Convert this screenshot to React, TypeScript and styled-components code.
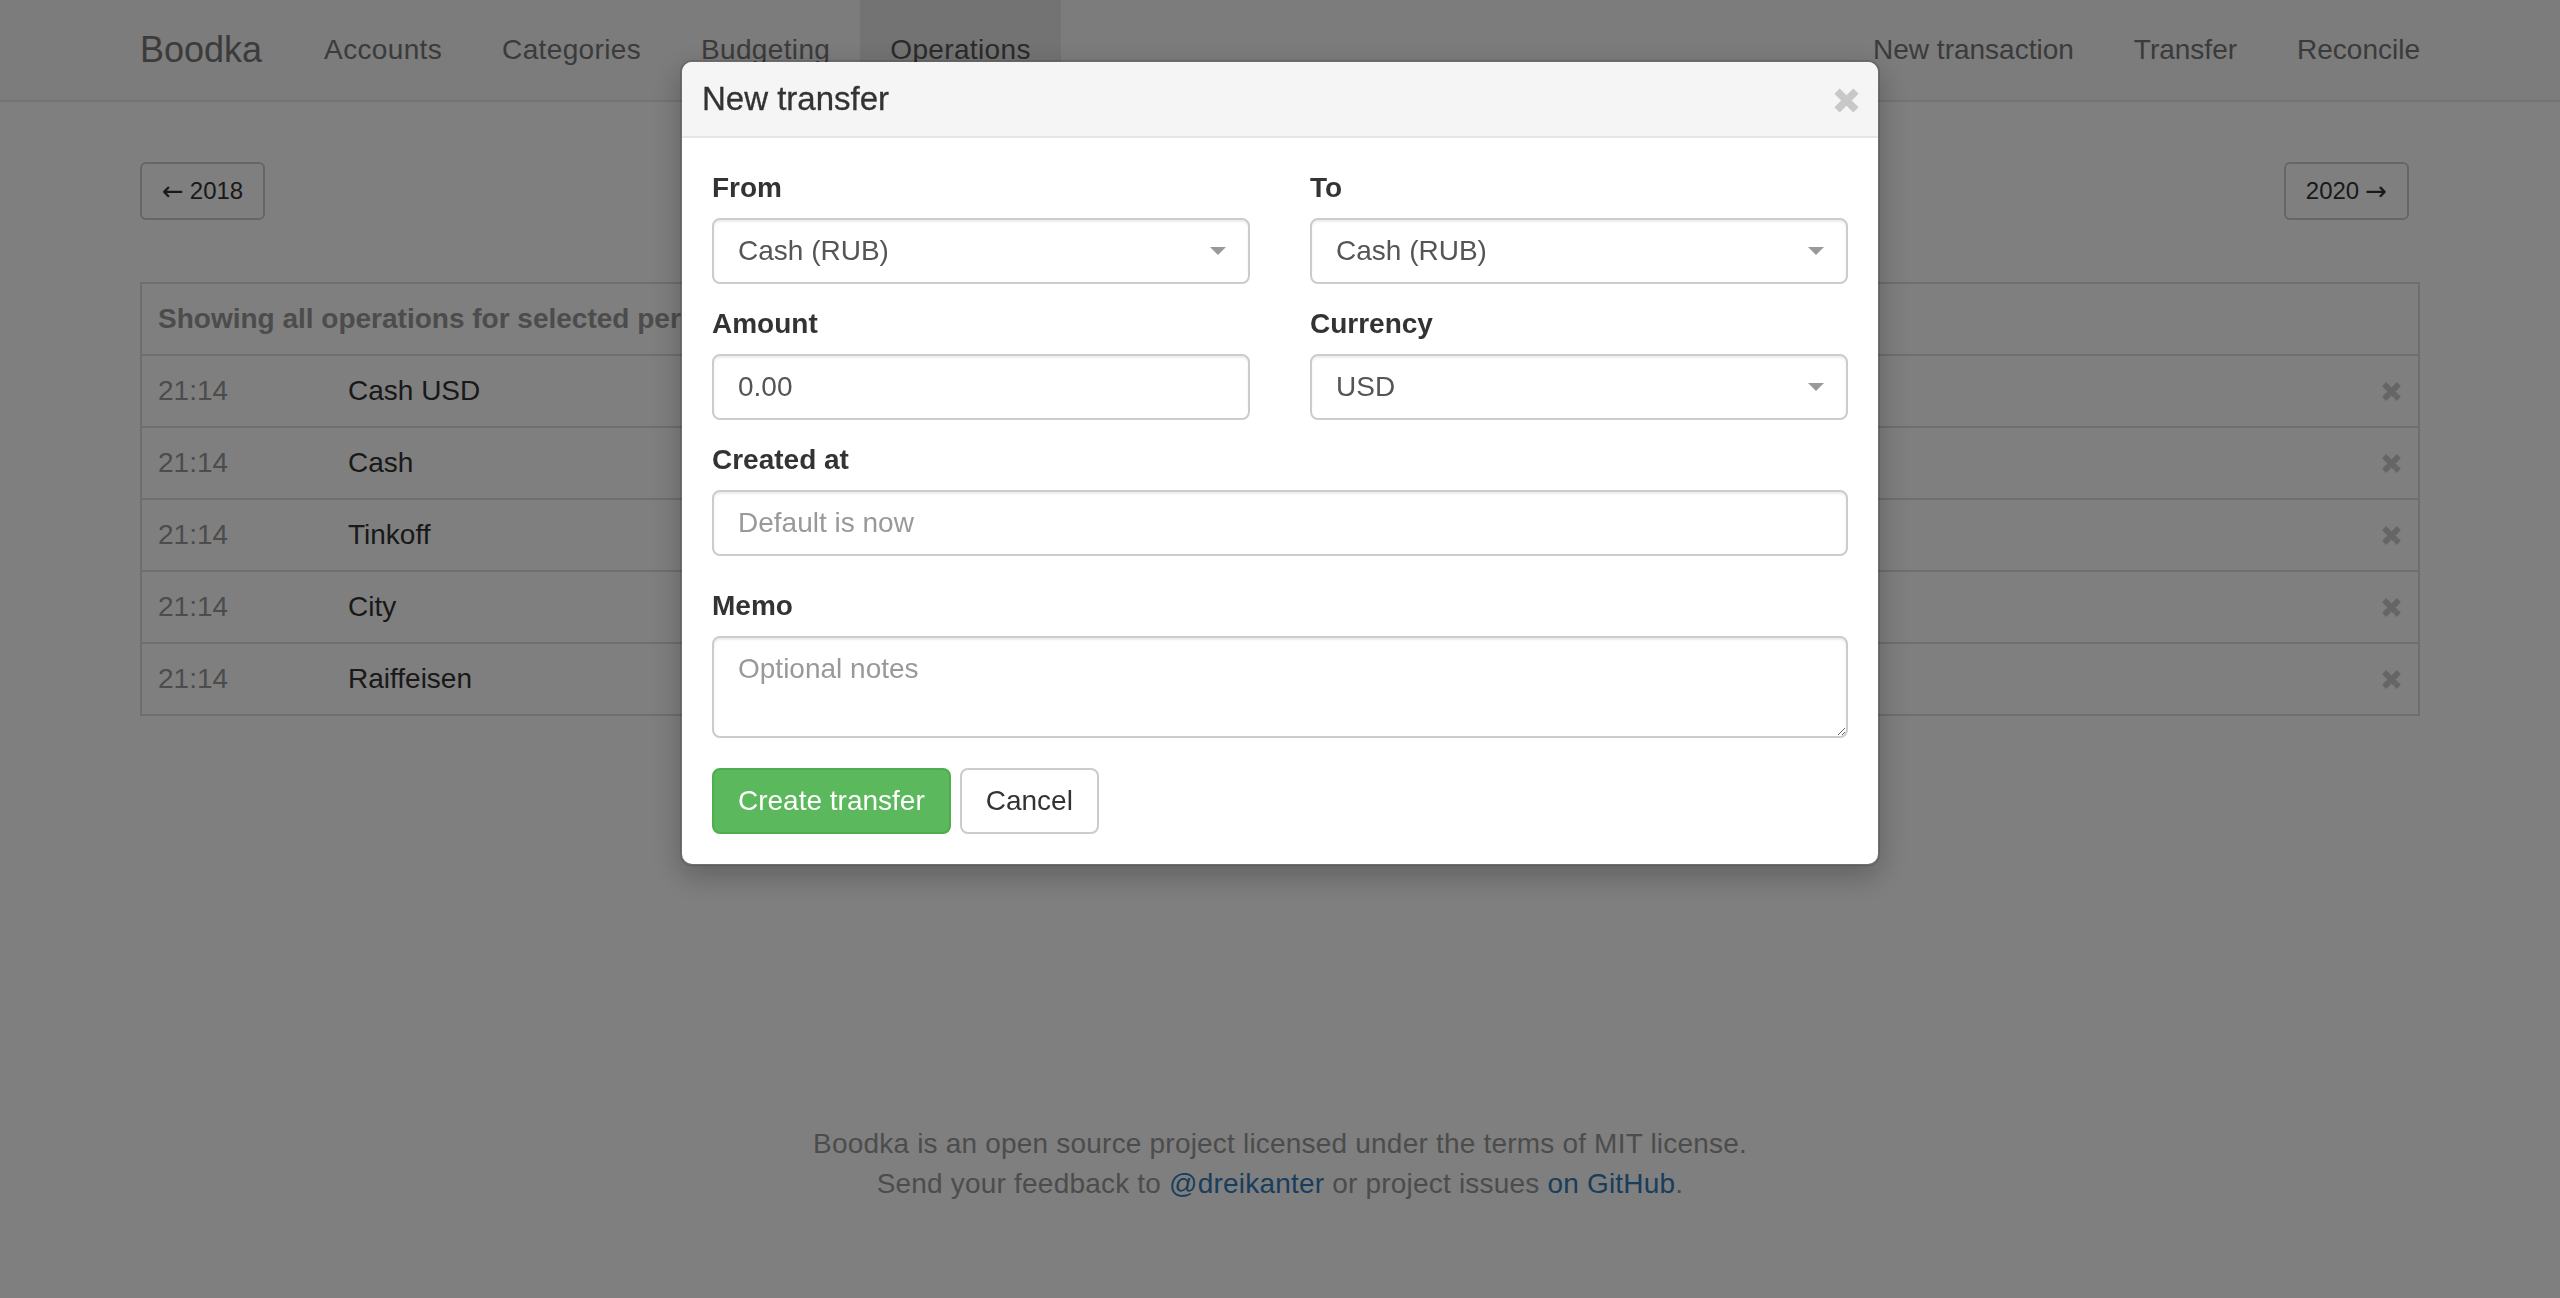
import React from "react";
import styled, { createGlobalStyle, css } from "styled-components";

const GlobalStyle = createGlobalStyle`
  * { box-sizing: border-box; }
  html, body { margin: 0; padding: 0; }
  body {
    background: #fff;
    font-family: "Liberation Sans", Arial, Helvetica, sans-serif;
    font-size: 28px;
    line-height: 40px;
    color: #333;
  }
`;

// ---- navbar ----

const Navbar = styled.nav`
  background: #f8f8f8;
  border-bottom: 2px solid #e7e7e7;
  margin-bottom: 40px;
`;

const NavInner = styled.div`
  width: 2280px;
  height: 100px;
  margin: 0 auto;
  display: flex;
`;

const Brand = styled.a`
  font-size: 36px;
  line-height: 40px;
  padding: 30px 32px 30px 0;
  color: #777;
  text-decoration: none;
`;

const NavList = styled.ul<{ $right?: boolean }>`
  display: flex;
  list-style: none;
  padding: 0;
  letter-spacing: ${({ $right }) => ($right ? "0" : "0.35px")};
  margin: 0 ${({ $right }) => ($right ? "-30px" : "0")} 0 ${({ $right }) => ($right ? "auto" : "0")};
`;

const NavLink = styled.a<{ $active?: boolean }>`
  display: block;
  padding: 30px;
  line-height: 40px;
  text-decoration: none;
  color: ${({ $active }) => ($active ? "#555" : "#777")};
  background: ${({ $active }) => ($active ? "#e7e7e7" : "transparent")};
`;

// ---- page content ----

const Container = styled.main`
  width: 2280px;
  margin: 0 auto;
`;

const YearBar = styled.div`
  display: flex;
  justify-content: space-between;
  padding-top: 20px;
`;

const YearButton = styled.a<{ $last?: boolean }>`
  display: inline-flex;
  align-items: center;
  gap: 6px;
  height: 58px;
  padding: 0 20px;
  font-size: 24px;
  line-height: 34px;
  color: #333;
  text-decoration: none;
  background: #fff;
  border: 2px solid #ccc;
  border-radius: 6px;
  margin-right: ${({ $last }) => ($last ? "11px" : "0")};
`;

const Arrow = styled.span`
  font-family: "DejaVu Sans", sans-serif;
  font-size: 26px;
  line-height: 1;
`;

const OpsTable = styled.table`
  width: 100%;
  margin-top: 62px;
  border: 2px solid #ddd;
  border-spacing: 0;
`;

const HeadCell = styled.th`
  padding: 16px;
  line-height: 38px;
  text-align: left;
  font-weight: 700;
  color: #999;
`;

const Cell = styled.td<{ $kind: "time" | "name" | "action" }>`
  border-top: 2px solid #ddd;
  padding: 16px;
  line-height: 38px;
  vertical-align: middle;
  ${({ $kind }) =>
    $kind === "time"
      ? css`
          width: 190px;
          color: #999;
        `
      : $kind === "action"
      ? css`
          width: 60px;
          text-align: right;
          line-height: 0;
        `
      : css`
          color: #333;
        `}
`;

const Footer = styled.footer`
  margin-top: 408px;
  padding-bottom: 80px;
  text-align: center;
  color: #999;
  line-height: 40px;
  letter-spacing: 0.2px;

  a {
    color: #337ab7;
    text-decoration: none;
  }
`;

// ---- modal ----

const Backdrop = styled.div`
  position: fixed;
  inset: 0;
  background: rgba(0, 0, 0, 0.5);
`;

const ModalLayer = styled.div`
  position: fixed;
  inset: 0;
  overflow-y: auto;
`;

const Dialog = styled.div`
  width: 1200px;
  margin: 60px auto;
  background: #fff;
  background-clip: padding-box;
  border: 2px solid rgba(0, 0, 0, 0.12);
  border-radius: 12px;
  box-shadow: 0 10px 30px rgba(0, 0, 0, 0.25);
`;

const ModalHeader = styled.div`
  display: flex;
  align-items: center;
  justify-content: space-between;
  padding: 20px;
  background: #f5f5f5;
  border-bottom: 2px solid #e5e5e5;
  border-radius: 10px 10px 0 0;
`;

const ModalTitle = styled.h4`
  margin: 0;
  font-size: 33px;
  line-height: 34px;
  font-weight: 400;
  color: #333;
  -webkit-text-stroke: 0.3px #333;
`;

const CloseButton = styled.button`
  display: flex;
  padding: 0;
  margin: 2px -2px 0 0;
  border: 0;
  background: none;
  cursor: pointer;
`;

const ModalBody = styled.form`
  padding: 30px;
`;

const TwoCols = styled.div`
  display: grid;
  grid-template-columns: 1fr 1fr;
  column-gap: 60px;
`;

const FormGroup = styled.div<{ $space: number }>`
  margin-bottom: ${({ $space }) => $space}px;
`;

const Label = styled.label`
  display: block;
  margin-bottom: 10px;
  font-weight: 700;
  line-height: 40px;
  color: #333;
`;

const fieldBase = css`
  display: block;
  width: 100%;
  padding: 12px 24px;
  font-family: inherit;
  font-size: 28px;
  line-height: 38px;
  color: #555;
  background: #fff;
  border: 2px solid #ccc;
  border-radius: 8px;
  box-shadow: inset 0 2px 2px rgba(0, 0, 0, 0.075);
  outline: none;

  &::placeholder {
    color: #999;
  }
`;

const TextInput = styled.input`
  ${fieldBase}
  height: 66px;
`;

const TextArea = styled.textarea`
  ${fieldBase}
  height: 102px;
  resize: vertical;
`;

const SelectWrap = styled.div`
  position: relative;

  &::after {
    content: "";
    position: absolute;
    right: 24px;
    top: 50%;
    margin-top: -4px;
    border-left: 8px solid transparent;
    border-right: 8px solid transparent;
    border-top: 8px solid #999;
    pointer-events: none;
  }
`;

const Select = styled.select`
  ${fieldBase}
  height: 66px;
  appearance: none;
`;

const Actions = styled.div`
  display: flex;
  gap: 9px;
`;

const Button = styled.button<{ $variant: "success" | "default" }>`
  padding: 12px 24px;
  font-family: inherit;
  font-size: 28px;
  line-height: 38px;
  border-radius: 8px;
  border: 2px solid;
  cursor: pointer;
  ${({ $variant }) =>
    $variant === "success"
      ? css`
          color: #fff;
          background: #5cb85c;
          border-color: #4cae4c;
        `
      : css`
          color: #333;
          background: #fff;
          border-color: #ccc;
        `}
`;

const RemoveIcon = ({ size, color }: { size: number; color: string }) => (
  <svg width={size} height={size} viewBox="0 0 24 24" aria-hidden="true">
    <g stroke={color} strokeWidth={6.6} strokeLinecap="butt">
      <line x1="3.6" y1="3.6" x2="20.4" y2="20.4" />
      <line x1="20.4" y1="3.6" x2="3.6" y2="20.4" />
    </g>
  </svg>
);

const operations = ["Cash USD", "Cash", "Tinkoff", "City", "Raiffeisen"];
const accounts = ["Cash (RUB)", "Cash USD (USD)", "Tinkoff (RUB)", "City (USD)", "Raiffeisen (RUB)"];

export default function App() {
  return (
    <>
      <GlobalStyle />
      <Navbar>
        <NavInner>
          <Brand href="#">Boodka</Brand>
          <NavList>
            <li><NavLink href="#">Accounts</NavLink></li>
            <li><NavLink href="#">Categories</NavLink></li>
            <li><NavLink href="#">Budgeting</NavLink></li>
            <li><NavLink href="#" $active>Operations</NavLink></li>
          </NavList>
          <NavList $right>
            <li><NavLink href="#">New transaction</NavLink></li>
            <li><NavLink href="#">Transfer</NavLink></li>
            <li><NavLink href="#">Reconcile</NavLink></li>
          </NavList>
        </NavInner>
      </Navbar>

      <Container>
        <YearBar>
          <YearButton href="#"><Arrow>←</Arrow>2018</YearButton>
          <YearButton href="#" $last>2020<Arrow>→</Arrow></YearButton>
        </YearBar>

        <OpsTable>
          <thead>
            <tr>
              <HeadCell colSpan={3}>Showing all operations for selected period</HeadCell>
            </tr>
          </thead>
          <tbody>
            {operations.map((name) => (
              <tr key={name}>
                <Cell $kind="time">21:14</Cell>
                <Cell $kind="name">{name}</Cell>
                <Cell $kind="action">
                  <RemoveIcon size={21} color="#ccc" />
                </Cell>
              </tr>
            ))}
          </tbody>
        </OpsTable>

        <Footer>
          Boodka is an open source project licensed under the terms of MIT license.
          <br />
          Send your feedback to <a href="#">@dreikanter</a> or project issues <a href="#">on GitHub</a>.
        </Footer>
      </Container>

      <Backdrop />
      <ModalLayer>
        <Dialog>
          <ModalHeader>
            <ModalTitle>New transfer</ModalTitle>
            <CloseButton type="button" aria-label="Close">
              <RemoveIcon size={27} color="#c8c8c8" />
            </CloseButton>
          </ModalHeader>
          <ModalBody onSubmit={(e) => e.preventDefault()}>
            <TwoCols>
              <FormGroup $space={20}>
                <Label>From</Label>
                <SelectWrap>
                  <Select defaultValue="Cash (RUB)">
                    {accounts.map((a) => <option key={a}>{a}</option>)}
                  </Select>
                </SelectWrap>
              </FormGroup>
              <FormGroup $space={20}>
                <Label>To</Label>
                <SelectWrap>
                  <Select defaultValue="Cash (RUB)">
                    {accounts.map((a) => <option key={a}>{a}</option>)}
                  </Select>
                </SelectWrap>
              </FormGroup>
              <FormGroup $space={20}>
                <Label>Amount</Label>
                <TextInput defaultValue="0.00" />
              </FormGroup>
              <FormGroup $space={20}>
                <Label>Currency</Label>
                <SelectWrap>
                  <Select defaultValue="USD">
                    <option>RUB</option>
                    <option>USD</option>
                    <option>EUR</option>
                  </Select>
                </SelectWrap>
              </FormGroup>
            </TwoCols>
            <FormGroup $space={30}>
              <Label>Created at</Label>
              <TextInput placeholder="Default is now" />
            </FormGroup>
            <FormGroup $space={30}>
              <Label>Memo</Label>
              <TextArea placeholder="Optional notes" />
            </FormGroup>
            <Actions>
              <Button type="submit" $variant="success">Create transfer</Button>
              <Button type="button" $variant="default">Cancel</Button>
            </Actions>
          </ModalBody>
        </Dialog>
      </ModalLayer>
    </>
  );
}
